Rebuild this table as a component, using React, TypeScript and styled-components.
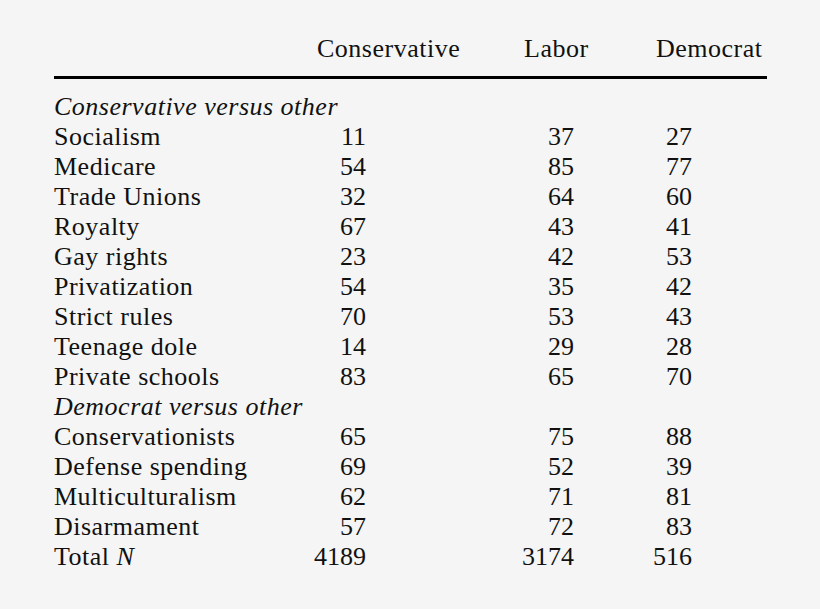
import styled, { createGlobalStyle } from "styled-components";

const Global = createGlobalStyle`
  html, body {
    margin: 0;
    padding: 0;
    background: #f5f5f5;
  }
`

const Page = styled.div`
  width: 820px;
  height: 609px;
  box-sizing: border-box;
  padding: 34px 0 0 54px;
  background: #f5f5f5;
  color: #111;
  font-family: "Liberation Serif", "Times New Roman", serif;
  font-size: 26px;
  line-height: 30px;
  letter-spacing: 0.5px;
`

const HeadRow = styled.div`
  display: grid;
  grid-template-columns: 263px 207px 132px auto;
  height: 30px;
  white-space: nowrap;
`

const Rule = styled.div`
  width: 713px;
  height: 3px;
  margin: 12px 0 13px;
  background: #000;
`

const Row = styled.div`
  display: grid;
  grid-template-columns: 240px 72px 208px 118px;
  height: 30px;
  white-space: nowrap;
`

const Label = styled.span``

const Num = styled.span`
  text-align: right;
  letter-spacing: 0;
`

const Section = styled.div`
  font-style: italic;
  height: 30px;
`

const Em = styled.i``

type Line = [string, string, string, string]

const conservative: Line[] = [
  ["Socialism", "11", "37", "27"],
  ["Medicare", "54", "85", "77"],
  ["Trade Unions", "32", "64", "60"],
  ["Royalty", "67", "43", "41"],
  ["Gay rights", "23", "42", "53"],
  ["Privatization", "54", "35", "42"],
  ["Strict rules", "70", "53", "43"],
  ["Teenage dole", "14", "29", "28"],
  ["Private schools", "83", "65", "70"],
]

const democrat: Line[] = [
  ["Conservationists", "65", "75", "88"],
  ["Defense spending", "69", "52", "39"],
  ["Multiculturalism", "62", "71", "81"],
  ["Disarmament", "57", "72", "83"],
]

function Rows({ data }: { data: Line[] }) {
  return (
    <>
      {data.map(([label, a, b, c]) => (
        <Row key={label}>
          <Label>{label}</Label>
          <Num>{a}</Num>
          <Num>{b}</Num>
          <Num>{c}</Num>
        </Row>
      ))}
    </>
  )
}

export default function App() {
  return (
    <>
      <Global />
      <Page>
        <HeadRow>
          <span />
          <span>Conservative</span>
          <span>Labor</span>
          <span>Democrat</span>
        </HeadRow>
        <Rule />
        <Section>Conservative versus other</Section>
        <Rows data={conservative} />
        <Section>Democrat versus other</Section>
        <Rows data={democrat} />
        <Row>
          <Label>Total <Em>N</Em></Label>
          <Num>4189</Num>
          <Num>3174</Num>
          <Num>516</Num>
        </Row>
      </Page>
    </>
  )
}
